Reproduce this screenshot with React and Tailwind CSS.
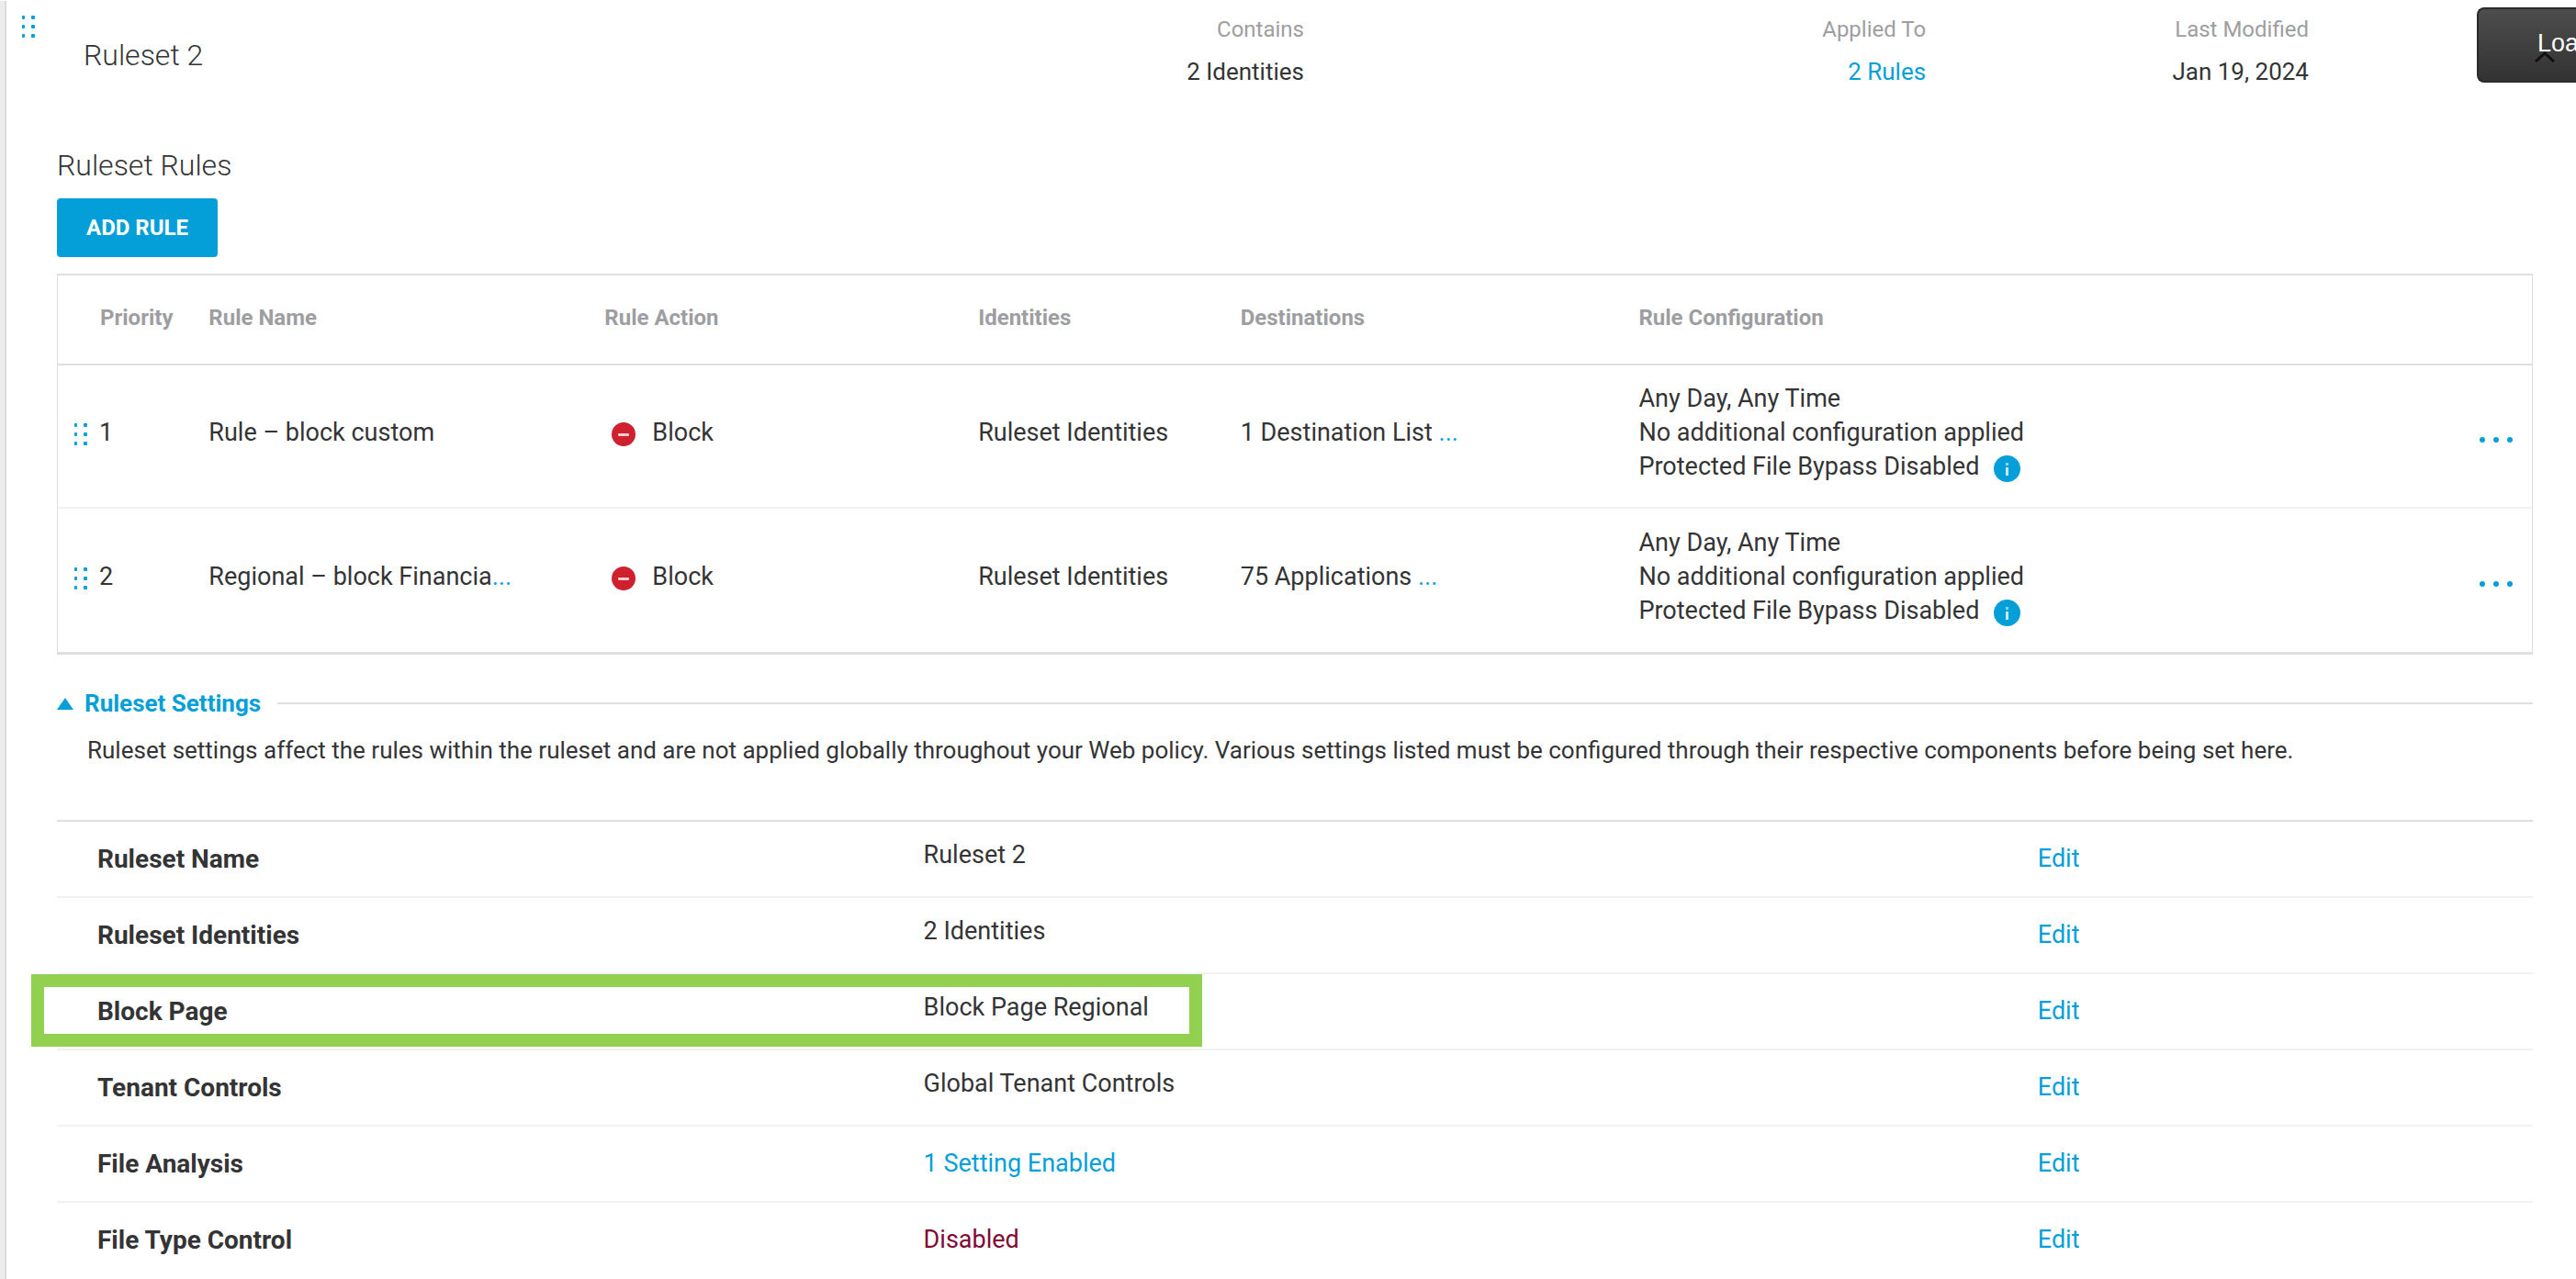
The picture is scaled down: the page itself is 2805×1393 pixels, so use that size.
import React from "react";

const rules = [
  { priority: 1, name: "Rule – block custom", more: false, action: "Block", identities: "Ruleset Identities", destinations: "1 Destination List" },
  { priority: 2, name: "Regional – block Financia", more: true, action: "Block", identities: "Ruleset Identities", destinations: "75 Applications" },
];

const settings = [
  { name: "Ruleset Name", value: "Ruleset 2" },
  { name: "Ruleset Identities", value: "2 Identities" },
  { name: "Block Page", value: "Block Page Regional", highlighted: true },
  { name: "Tenant Controls", value: "Global Tenant Controls" },
  { name: "File Analysis", value: "1 Setting Enabled", kind: "link" },
  { name: "File Type Control", value: "Disabled", kind: "disabled" },
];

function DragHandle() {
  return (
    <svg width="16" height="28" viewBox="0 0 16 28" className="block shrink-0 fill-[#049fd9]" aria-hidden="true">
      {[2, 12, 22].map((y) => (
        <g key={y}>
          <rect x="1" y={y} width="3" height="4" rx="1" />
          <rect x="11" y={y} width="4" height="4" rx="1" />
        </g>
      ))}
    </svg>
  );
}

function BlockIcon() {
  return (
    <svg width="26" height="26" viewBox="0 0 26 26" className="block shrink-0" aria-hidden="true">
      <circle cx="13" cy="13" r="13" fill="#cf2030" />
      <rect x="7" y="12" width="12" height="3" rx="1" fill="#f3ccd0" />
    </svg>
  );
}

function InfoIcon() {
  return (
    <svg width="29" height="29" viewBox="0 0 29 29" className="block" aria-hidden="true">
      <circle cx="14.5" cy="14.5" r="14.5" fill="#049fd9" />
      <rect x="13" y="8" width="3" height="3" fill="#8fd3ee" />
      <rect x="13" y="13" width="3" height="9" fill="#c4e8f6" />
    </svg>
  );
}

function Meta({ label, className, children }) {
  return (
    <div className={className}>
      <div className="text-[24px] text-[#9e9ea2]">{label}</div>
      <div className="text-[26px]">{children}</div>
    </div>
  );
}

export default function App() {
  return (
    <div className="flex min-h-screen overflow-hidden bg-white font-['Roboto','Liberation_Sans',sans-serif] text-[27px] leading-[37px] text-[#343436]">
      <div className="mt-px w-[7px] shrink-0 border-r-2 border-[#dcdcdc] bg-[#ececec]" />
      <main className="relative min-w-0 flex-1">
        <header className="flex pt-[9px] leading-[46px]">
          <div className="flex w-[50.5%] shrink-0">
            <button type="button" aria-label="Move ruleset" className="ml-4 h-fit pt-1.5">
              <DragHandle />
            </button>
            <h1 className="ml-[52px] flex-1 pt-7 text-[32px] font-light">Ruleset 2</h1>
            <Meta label="Contains" className="text-right">2 Identities</Meta>
          </div>
          <Meta label="Applied To" className="w-[24.2%] text-right">
            <a href="#rules" className="text-[#049fd9]">2 Rules</a>
          </Meta>
          <Meta label="Last Modified" className="w-[14.9%] text-right">Jan 19, 2024</Meta>
        </header>

        <div role="status" className="absolute top-2 right-0 flex h-[82px] w-[108px] items-center overflow-hidden rounded-l-lg border-2 border-r-0 border-[#2b2b2b] bg-linear-to-b from-[#4d4d4d] to-[#333333] pb-1 pl-16 font-['Liberation_Sans',sans-serif] text-[27px] whitespace-nowrap text-white">
          <svg width="24" height="12" viewBox="0 0 24 12" className="absolute top-[46px] left-[60px] fill-none stroke-[#111111]" strokeWidth="3" aria-hidden="true">
            <path d="M2 11 L12 2 L22 11" />
          </svg>
          <span className="relative">Loa</span>
        </div>

        <div className="mr-[47px] ml-[55px]">
          <h2 className="mt-[59px] text-[32px] leading-10 font-light">Ruleset Rules</h2>
          <button type="button" className="mt-4 block h-16 rounded bg-[#049fd9] px-8 text-[24px] font-bold text-white">ADD RULE</button>

          <table id="rules" className="mt-[18px] w-full table-fixed border-separate border-spacing-0 border border-t-2 border-b-[3px] border-[#dfdfdf] text-left">
            <thead>
              <tr className="h-[98px] text-[24px] text-[#9e9ea2] *:border-b-2 *:border-[#dfdfdf] *:p-0 *:pb-1">
                <th className="w-[6.1%]"><span className="pl-[46px]">Priority</span></th>
                <th className="w-[16%]">Rule Name</th>
                <th className="w-[15.1%]">Rule Action</th>
                <th className="w-[10.6%]">Identities</th>
                <th className="w-[16.1%]">Destinations</th>
                <th>Rule Configuration</th>
                <th className="w-[5%]" aria-label="Actions" />
              </tr>
            </thead>
            <tbody>
              {rules.map((rule) => (
                <tr key={rule.priority} className="h-[156px] *:border-b-2 *:border-[#f2f2f2] *:p-0 *:pb-2 last:*:border-b-0">
                  <td>
                    <div className="flex items-center pl-[17px]">
                      <button type="button" aria-label={"Move rule " + rule.priority} className="pt-1"><DragHandle /></button>
                      <span className="ml-3">{rule.priority}</span>
                    </div>
                  </td>
                  <td>
                    {rule.name}
                    {rule.more && <a href="#name" className="text-[#049fd9]">...</a>}
                  </td>
                  <td>
                    <div className="flex items-center gap-[18px] pl-2">
                      <span className="pt-1"><BlockIcon /></span>
                      {rule.action}
                    </div>
                  </td>
                  <td>{rule.identities}</td>
                  <td>{rule.destinations} <a href="#destinations" className="text-[#049fd9]">...</a></td>
                  <td>
                    <div>Any Day, Any Time</div>
                    <div>No additional configuration applied</div>
                    <div className="flex items-center gap-4">
                      Protected File Bypass Disabled
                      <button type="button" aria-label="About file bypass" className="pt-1"><InfoIcon /></button>
                    </div>
                  </td>
                  <td>
                    <button type="button" aria-label="More actions" className="mr-5 ml-auto block pt-4">
                      <svg width="38" height="8" viewBox="0 0 38 8" className="block fill-[#049fd9]" aria-hidden="true">
                        <circle cx="4" cy="4" r="3" />
                        <circle cx="19" cy="4" r="3" />
                        <circle cx="34" cy="4" r="3" />
                      </svg>
                    </button>
                  </td>
                </tr>
              ))}
            </tbody>
          </table>

          <section>
            <div className="mt-[33px] flex items-center">
              <button type="button" aria-expanded="true" className="flex items-center gap-3 text-[26px] leading-10 font-bold text-[#049fd9]">
                <svg width="18" height="13" viewBox="0 0 18 13" className="fill-[#049fd9]" aria-hidden="true">
                  <path d="M9 0 L18 13 H0 Z" />
                </svg>
                Ruleset Settings
              </button>
              <div className="ml-[18px] h-0.5 flex-1 bg-[#dfdfdf]" />
            </div>
            <p className="mt-[11px] pl-[33px] text-[26px] leading-10">
              Ruleset settings affect the rules within the ruleset and are not applied globally throughout your Web policy. Various settings listed must be configured through their respective components before being set here.
            </p>

            <dl className="mt-14 border-t-2 border-[#dfdfdf]">
              {settings.map((s) => (
                <div key={s.name} className="relative flex h-[83px] items-center border-b-2 border-[#f2f2f2] last:border-transparent">
                  <dt className="w-[35%] pl-11 text-[28px] font-bold">{s.name}</dt>
                  {s.kind === "link" && <dd className="w-[45%]"><a href="#analysis" className="text-[#049fd9]">{s.value}</a></dd>}
                  {s.kind === "disabled" && <dd className="w-[45%] text-[#7f0a34]">{s.value}</dd>}
                  {!s.kind && <dd className="w-[45%] pb-2">{s.value}</dd>}
                  <dd><a href="#edit" aria-label={"Edit " + s.name} className="text-[#049fd9]">Edit</a></dd>
                  {s.highlighted && <div className="pointer-events-none absolute top-0 -left-7 h-[79px] w-[47.3%] border-[14px] border-[#92d050]" />}
                </div>
              ))}
            </dl>
          </section>
        </div>
      </main>
    </div>
  );
}
